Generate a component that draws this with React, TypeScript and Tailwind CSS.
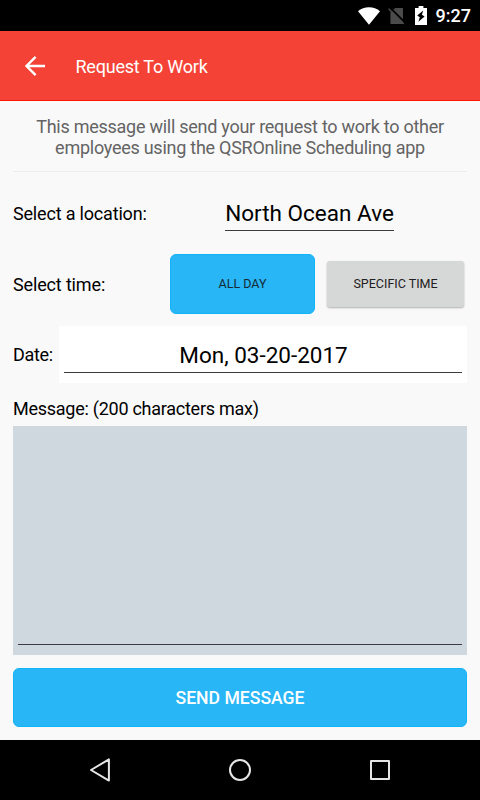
import React from "react"

function StatusBar() {
  return (
    <div className="flex h-[31px] shrink-0 items-center justify-end bg-black pr-[10px] text-white">
      <svg className="mr-[8px] h-[18px] w-[22px]" viewBox="0 0 22 18" fill="currentColor">
        <path d="M0 4.2C3 1.7 6.8 0.3 11 0.3s8 1.4 11 3.9L11 17.8z" />
      </svg>
      <svg className="mr-[10px] h-[18px] w-[17px]" viewBox="0 0 17 18">
        <path d="M7.2 1H15v16H2.4V5.4z" fill="#4b4b4b" />
        <path d="M2 0.6l15 15" stroke="#000" strokeWidth="1.8" />
        <path d="M0.6 1.8l15.2 15.2" stroke="#4b4b4b" strokeWidth="1.5" />
      </svg>
      <svg className="mr-[9px] h-[19px] w-[12px]" viewBox="0 0 12 19">
        <path d="M3.6 0h4.8v2H12v17H0V2h3.6z" fill="currentColor" />
        <path d="M8.2 4.4L2.2 9.6l2.6 1.6-1.4 4.6 6.2-5.4-2.7-1.6z" fill="#000" />
      </svg>
      <span className="-mr-px text-[18px] leading-[31px] font-medium">9:27</span>
    </div>
  )
}

function NavBar() {
  return (
    <nav className="flex h-[60px] shrink-0 items-center justify-center gap-[80px] bg-black text-[#e6e6e6]">
      <button className="flex h-[60px] w-[60px] items-center justify-center" aria-label="Back">
        <svg className="h-[30px] w-[30px]" viewBox="0 0 30 30" fill="none" stroke="currentColor" strokeWidth="2" strokeLinejoin="round">
          <path d="M23.9 4.4v21.2L6 15z" />
        </svg>
      </button>
      <button className="flex h-[60px] w-[60px] items-center justify-center" aria-label="Home">
        <svg className="h-[30px] w-[30px]" viewBox="0 0 30 30" fill="none" stroke="currentColor" strokeWidth="2">
          <circle cx="15" cy="15" r="10" />
        </svg>
      </button>
      <button className="flex h-[60px] w-[60px] items-center justify-center" aria-label="Overview">
        <svg className="h-[30px] w-[30px]" viewBox="0 0 30 30" fill="none" stroke="currentColor" strokeWidth="2" strokeLinejoin="round">
          <rect x="6" y="6" width="18" height="18" />
        </svg>
      </button>
    </nav>
  )
}

export default function App() {
  return (
    <div className="flex h-[800px] w-[480px] flex-col overflow-hidden bg-[#f9f9f9] font-[Roboto,sans-serif] text-black">
      <StatusBar />

      {/* Toolbar */}
      <header className="flex h-[70px] shrink-0 items-center border-b border-[#ff1500] bg-[#f44336] pl-[23px] text-white">
        <svg className="h-6 w-6" viewBox="0 0 24 24" fill="none" stroke="currentColor" strokeWidth="2.4">
          <path d="M22 12H4M12.6 2.9L3.5 12l9.1 9.1" />
        </svg>
        <h1 className="ml-[28.5px] pt-[2px] text-[18px] leading-6 tracking-[-0.22px]">Request To Work</h1>
      </header>

      <main className="flex flex-1 flex-col px-[13px]">
        <p className="h-[71px] border-b border-[#ececec] pt-[15px] text-center text-[18px] leading-[21px] tracking-[-0.26px] text-[#646464]">
          This message will send your request to work to other
          <br />
          employees using the QSROnline Scheduling app
        </p>

        <div className="flex h-[82px] items-center">
          <span className="w-[139px] text-[18px] tracking-[-0.18px]">Select a location:</span>
          <div className="flex flex-1 justify-center">
            <span className="mt-[4px] h-[31px] border-b border-[#3c3c3c] text-[22.5px] leading-[26px]">North Ocean Ave</span>
          </div>
        </div>

        <div className="flex h-[60px] items-center">
          <span className="w-[157px] text-[18px] tracking-[-0.15px]">Select time:</span>
          <button className="h-[60px] w-[145px] rounded-[6px] border border-[#10b4fb] bg-[#29b6f6] pt-px text-[12.5px] text-[#142a35]">
            ALL DAY
          </button>
          <button className="ml-[12px] h-[46px] w-[137px] rounded-[3px] bg-[#d6d7d7] pt-px text-[12.5px] text-[#202020] shadow-[0_1px_2px_rgba(0,0,0,0.3)]">
            SPECIFIC TIME
          </button>
        </div>

        <div className="mt-[12px] flex h-[57px] items-center">
          <span className="w-[46px] text-[18px] tracking-[-0.3px]">Date:</span>
          <div className="h-[57px] flex-1 bg-white px-[5px] pt-[16px]">
            <div className="h-[31px] border-b border-[#3c3c3c] pl-px text-center text-[22.5px] leading-[26px]">
              Mon, 03-20-2017
            </div>
          </div>
        </div>

        <div className="mt-[13px] h-[30px] text-[18px] leading-[25px] tracking-[-0.26px]">Message: (200 characters max)</div>
        <div className="flex h-[229px] flex-col justify-end bg-[#cfd8de] px-[5px] pb-[10px]">
          <div className="border-b border-[#3c3c40]" />
        </div>

        <button className="mt-[13px] h-[59px] rounded-[6px] border border-[#10b4fb] bg-[#29b6f6] pt-px text-[17.6px] font-medium text-white">
          SEND MESSAGE
        </button>
      </main>

      <NavBar />
    </div>
  )
}
